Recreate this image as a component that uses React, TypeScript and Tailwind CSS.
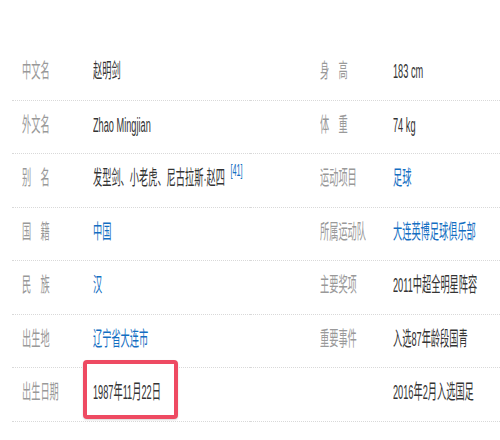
import React from "react";

type Cell = { label: string; value: string; link?: boolean; sup?: string; boxed?: boolean };

const left: Cell[] = [
  { label: "中文名", value: "赵明剑" },
  { label: "外文名", value: "Zhao Mingjian" },
  { label: "别　名", value: "发型剑、小老虎、尼古拉斯·赵四", sup: "[41]" },
  { label: "国　籍", value: "中国", link: true },
  { label: "民　族", value: "汉", link: true },
  { label: "出生地", value: "辽宁省大连市", link: true },
  { label: "出生日期", value: "1987年11月22日", boxed: true },
];

const right: Cell[] = [
  { label: "身　高", value: "183 cm" },
  { label: "体　重", value: "74 kg" },
  { label: "运动项目", value: "足球", link: true },
  { label: "所属运动队", value: "大连英博足球俱乐部", link: true },
  { label: "主要奖项", value: "2011中超全明星阵容" },
  { label: "重要事件", value: "入选87年龄段国青" },
  { label: "", value: "2016年2月入选国足" },
];

const font = { fontFamily: '"Liberation Sans", "Noto Sans CJK SC", sans-serif' };

function Row({ c, labelW, pad }: { c: Cell; labelW: string; pad: string }) {
  return (
    <div className={`flex h-[53.5px] items-center border-b border-dotted border-[#d9d9d9] ${pad}`}>
      <div className={`${labelW} shrink-0`}>
        <span className="inline-block origin-left scale-x-[0.46] whitespace-nowrap text-[20px] leading-none text-[#999999]">
          {c.label}
        </span>
      </div>
      <div className="relative flex-1">
        {c.boxed && (
          <div className="absolute left-[-10px] top-[-22px] h-[59px] w-[95px] rounded-[4px] border-[4px] border-[#ee4a62] bg-white shadow-[0_1px_2px_rgba(0,0,0,0.15)]" />
        )}
        <span
          className={`relative z-10 inline-block origin-left scale-x-[0.46] whitespace-nowrap text-[20px] leading-none ${
            c.link ? "text-[#136ec2]" : "text-[#333333]"
          }`}
        >
          {c.value}
          {c.sup && (
            <sup className="relative top-[-9px] ml-[12px] text-[16px] text-[#136ec2]">{c.sup}</sup>
          )}
        </span>
      </div>
    </div>
  );
}

export default function App() {
  return (
    <div className="h-[440px] w-[500px] overflow-hidden bg-white pt-[47px] pl-[12px]" style={font}>
      <div className="flex">
        <div className="w-[238px] shrink-0">
          {left.map((c, i) => (
            <Row key={i} c={c} labelW="w-[71px]" pad="pl-[10px]" />
          ))}
        </div>
        <div className="flex-1">
          {right.map((c, i) => (
            <Row key={i} c={c} labelW="w-[73px]" pad="pl-[70px]" />
          ))}
        </div>
      </div>
    </div>
  );
}
